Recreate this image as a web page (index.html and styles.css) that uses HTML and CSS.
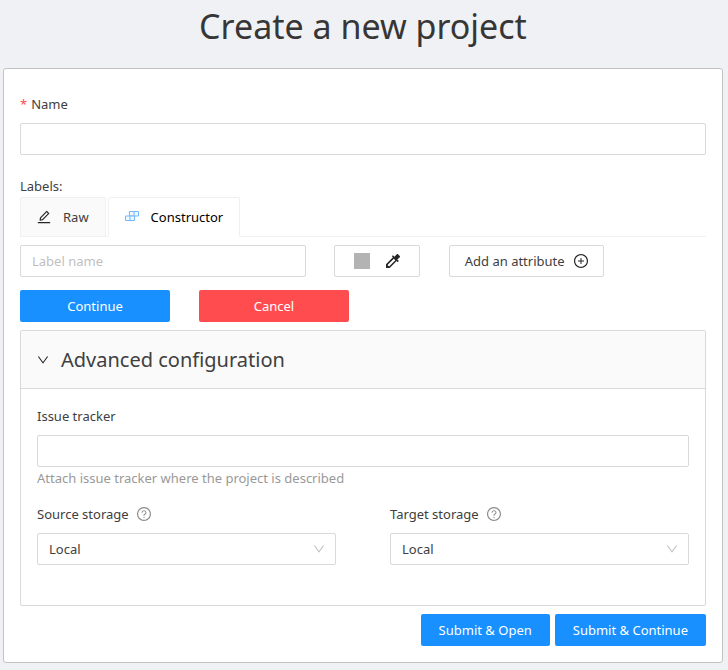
FILE: index.html
```html
<!DOCTYPE html>
<html lang="en">
<head>
<meta charset="utf-8">
<title>Create a new project</title>
<link rel="stylesheet" href="styles.css">
</head>
<body>
<svg class="sprite" aria-hidden="true">
  <symbol id="down" viewBox="64 64 896 896"><path d="M884 256h-75c-5.1 0-9.9 2.5-12.9 6.6L512 654.2 227.9 262.6c-3-4.1-7.8-6.6-12.9-6.6h-75c-6.5 0-10.3 7.4-6.5 12.7l352.6 486.1c12.8 17.6 39 17.6 51.7 0l352.6-486.1c3.9-5.3.1-12.7-6.4-12.7z"/></symbol>
  <symbol id="question" viewBox="64 64 896 896"><path d="M512 64C264.600 64 64 264.600 64 512s200.600 448 448 448 448-200.600 448-448S759.400 64 512 64zm0 820c-205.400 0-372-166.600-372-372s166.600-372 372-372 372 166.600 372 372-166.600 372-372 372z"/><path d="M623.6 316.700C593.600 290.400 554 276 512 276s-81.600 14.500-111.600 40.700C369.200 344 352 380.700 352 420v7.600c0 4.400 3.600 8 8 8h48c4.400 0 8-3.600 8-8V420c0-44.100 43.100-80 96-80s96 35.900 96 80c0 31.100-22 59.600-56.100 72.700-21.200 8.100-39.200 22.300-52.100 40.900-13.100 19-19.900 41.800-19.900 64.900V620c0 4.400 3.600 8 8 8h48c4.400 0 8-3.600 8-8v-22.700a48.300 48.300 0 0130.900-44.800c59-22.700 97.100-74.700 97.100-132.500.1-39.300-17.100-76-48.300-103.300zM472 732a40 40 0 1080 0 40 40 0 10-80 0z"/></symbol>
</svg>
<main class="page">
  <h1 class="title">Create a new project</h1>
  <form class="card">
    <label class="field-label" for="name"><span class="required">*</span> Name</label>
    <input class="control" id="name" type="text" required>

    <div class="labels-title">Labels:</div>
    <div class="tabs" role="tablist">
      <button class="tab" type="button" role="tab" aria-selected="false">
        <svg class="icon" viewBox="64 64 896 896"><path d="M257.7 752c2 0 4-.2 6-.5L431.9 722c2-.4 3.9-1.3 5.3-2.8l423.9-423.9a9.96 9.96 0 000-14.1L694.9 114.9c-1.9-1.9-4.4-2.9-7.100-2.900s-5.200 1-7.100 2.900L256.800 538.800c-1.500 1.500-2.400 3.300-2.800 5.300l-29.500 168.200a33.500 33.500 0 009.400 29.800c6.600 6.400 14.900 9.900 23.800 9.900zm67.400-174.400L687.800 215l73.300 73.300-362.700 362.600-88.900 15.700 15.600-89zM880 836H144c-17.700 0-32 14.300-32 32v36c0 4.400 3.600 8 8 8h784c4.400 0 8-3.600 8-8v-36c0-17.700-14.300-32-32-32z"/></svg>
        Raw
      </button>
      <button class="tab tab-active" type="button" role="tab" aria-selected="true">
        <svg class="icon" viewBox="0 0 14 14"><g fill="#f0f8ff" stroke="#74b8ff"><path d="M4.500 1.500h9v4.500h-9zM9 1.500v4.500"/><path d="M.5 6h9v4.500h-9zM5 6v4.500"/></g></svg>
        Constructor
      </button>
    </div>

    <div class="label-row">
      <input class="control label-name" type="text" placeholder="Label name" aria-label="Label name">
      <button class="outline color-button" type="button" aria-label="Label color">
        <span class="swatch"></span>
        <svg class="icon" viewBox="3 3 18 18"><path d="M20.710 5.630l-2.340-2.340c-.39-.39-1.020-.39-1.410 0l-3.120 3.120-1.930-1.910-1.410 1.410 1.420 1.420L3 16.250V21h4.750l8.920-8.920 1.420 1.420 1.410-1.410-1.920-1.920 3.120-3.120c.4-.4.4-1.030.01-1.420zM6.920 19L5 17.080l8.060-8.060 1.920 1.920L6.920 19z"/></svg>
      </button>
      <button class="outline add-button" type="button">
        Add an attribute
        <svg class="icon" viewBox="64 64 896 896"><path d="M696 480H544V328c0-4.400-3.600-8-8-8h-48c-4.400 0-8 3.600-8 8v152H328c-4.400 0-8 3.600-8 8v48c0 4.400 3.600 8 8 8h152v152c0 4.400 3.600 8 8 8h48c4.400 0 8-3.600 8-8V544h152c4.400 0 8-3.600 8-8v-48c0-4.400-3.600-8-8-8z"/><path d="M512 64C264.600 64 64 264.600 64 512s200.600 448 448 448 448-200.600 448-448S759.400 64 512 64zm0 820c-205.400 0-372-166.600-372-372s166.600-372 372-372 372 166.600 372 372-166.600 372-372 372z"/></svg>
      </button>
    </div>
    <div class="label-actions">
      <button class="solid wide" type="button">Continue</button>
      <button class="solid wide danger" type="button">Cancel</button>
    </div>

    <section class="advanced">
      <h2 class="advanced-heading">
        <button class="advanced-toggle" type="button" aria-expanded="true">
          <svg class="icon icon-small"><use href="#down"/></svg>
          Advanced configuration
        </button>
      </h2>
      <div class="advanced-body">
        <label class="field-label" for="tracker">Issue tracker</label>
        <input class="control" id="tracker" type="text" aria-describedby="tracker-help">
        <p class="help" id="tracker-help">Attach issue tracker where the project is described</p>
        <div class="storages">
          <div>
            <div class="field-label"><label for="source">Source storage</label><svg class="icon muted"><use href="#question"/></svg></div>
            <div class="select">
              <select class="control" id="source"><option>Local</option></select>
              <svg class="icon icon-small arrow"><use href="#down"/></svg>
            </div>
          </div>
          <div>
            <div class="field-label"><label for="target">Target storage</label><svg class="icon muted"><use href="#question"/></svg></div>
            <div class="select">
              <select class="control" id="target"><option>Local</option></select>
              <svg class="icon icon-small arrow"><use href="#down"/></svg>
            </div>
          </div>
        </div>
      </div>
    </section>

    <div class="submit-row">
      <button class="solid" type="submit">Submit &amp; Open</button>
      <button class="solid" type="submit">Submit &amp; Continue</button>
    </div>
  </form>
</main>
</body>
</html>
```
FILE: styles.css
```css
* {
  box-sizing: border-box;
}

body {
  margin: 0;
  background: #f0f1f5;
  color: #404040;
  font: 13px/22px "Noto Sans", "Open Sans", sans-serif;
}

button,
input,
select {
  margin: 0;
  color: inherit;
  font: inherit;
}

.sprite {
  position: absolute;
  width: 0;
  height: 0;
}

.page {
  padding: 0 5px 7px 3px;
}

.title {
  margin: 0 0 16px;
  color: #363636;
  font-size: 34px;
  font-weight: 400;
  line-height: 52px;
  text-align: center;
}

.card {
  padding: 24px 16px 16px;
  border: 1px solid #c3c3c3;
  border-radius: 3px;
  background: #fff;
}

.field-label {
  display: flex;
  align-items: center;
  gap: 8px;
  height: 22px;
  margin-bottom: 8px;
}

.required {
  margin-right: -4px;
  color: #ff4d4f;
}

.control {
  display: block;
  width: 100%;
  height: 32px;
  padding: 0 11px;
  border: 1px solid #d9d9d9;
  border-radius: 2px;
  background: #fff;
}

.control::placeholder {
  color: #bfbfbf;
}

.labels-title {
  margin-top: 20px;
}

.tabs {
  display: flex;
  gap: 2px;
  margin-bottom: 8px;
  box-shadow: inset 0 -1px #f0f0f0;
}

.tab {
  display: flex;
  align-items: center;
  gap: 12px;
  height: 40px;
  padding: 0 16px;
  border: 1px solid #f0f0f0;
  border-radius: 2px 2px 0 0;
  background: #fafafa;
}

.tab-active {
  border-bottom-color: #fff;
  background: #fff;
  color: #000;
}

.icon {
  flex: none;
  width: 14px;
  height: 14px;
  fill: #262626;
}

.icon-small {
  width: 12px;
  height: 12px;
}

.muted {
  fill: #8c8c8c;
}

.label-row {
  display: grid;
  grid-template-columns: repeat(24, 1fr);
}

.label-name {
  grid-column: 1 / 11;
}

.outline {
  display: flex;
  align-items: center;
  justify-content: center;
  height: 32px;
  padding: 0 15px;
  border: 1px solid #d9d9d9;
  border-radius: 2px;
  background: #fff;
  white-space: nowrap;
}

.color-button {
  grid-column: 12 / 15;
  gap: 16px;
}

.swatch {
  width: 16px;
  height: 16px;
  background: #b3b3b3;
}

.add-button {
  grid-column: 16 / 25;
  justify-self: start;
  gap: 9px;
}

.label-actions {
  display: flex;
  gap: 29px;
  margin: 13px 0 8px;
}

.solid {
  height: 32px;
  padding: 0 16px;
  border: 0;
  border-radius: 2px;
  background: #1890ff;
  color: #fff;
}

.wide {
  width: 150px;
}

.danger {
  background: #ff4d4f;
}

.advanced {
  border: 1px solid #d9d9d9;
  border-radius: 2px;
}

.advanced-heading {
  margin: 0;
  border-bottom: 1px solid #d9d9d9;
  background: #fafafa;
  font-size: 20px;
  font-weight: 400;
}

.advanced-toggle {
  display: flex;
  align-items: center;
  gap: 12px;
  width: 100%;
  height: 57px;
  padding: 0 16px;
  border: 0;
  background: none;
}

.advanced-body {
  padding: 16px 16px 40px;
}

.help {
  margin: 0 0 14px;
  color: #999;
}

.storages {
  display: grid;
  grid-template-columns: 1fr 1fr;
  gap: 54px;
}

.select {
  display: grid;
  align-items: center;
}

.select > * {
  grid-area: 1 / 1;
}

.select select {
  appearance: none;
}

.arrow {
  justify-self: end;
  margin-right: 11px;
  fill: #bfbfbf;
  pointer-events: none;
}

.submit-row {
  display: flex;
  justify-content: flex-end;
  gap: 5px;
  margin-top: 8px;
}

.submit-row .solid {
  padding: 0 18px;
}
```
